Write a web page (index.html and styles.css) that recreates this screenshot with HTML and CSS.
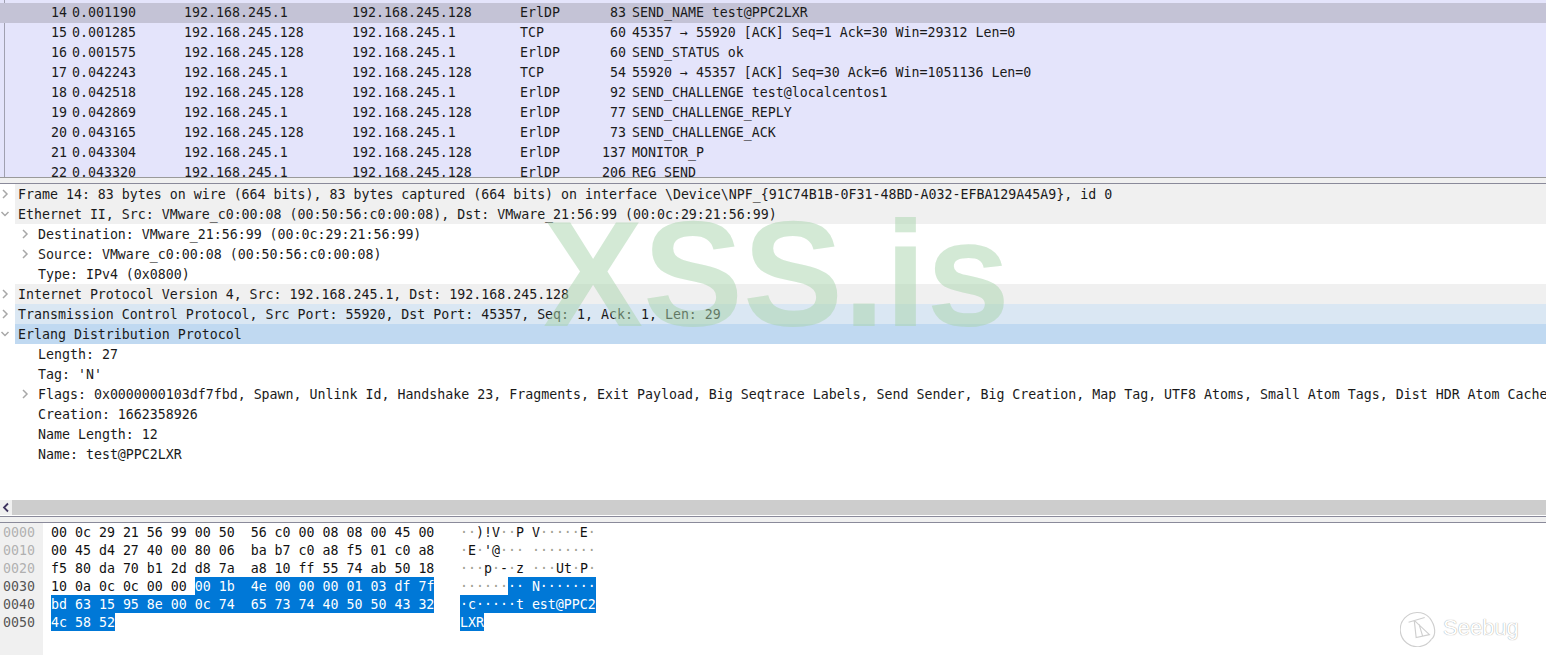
FILE: index.html
```html
<!DOCTYPE html>
<html>
<head>
<meta charset="utf-8">
<title>Wireshark capture</title>
<link rel="stylesheet" href="styles.css">
</head>
<body>
<main class="app">
  <section class="list">
    <div class="rows">
    <div class="pkt sel"><span class="no">14</span><span>0.001190</span><span>192.168.245.1</span><span>192.168.245.128</span><span>ErlDP</span><span class="len">83</span><span>SEND_NAME test@PPC2LXR</span></div>
    <div class="pkt"><span class="no">15</span><span>0.001285</span><span>192.168.245.128</span><span>192.168.245.1</span><span>TCP</span><span class="len">60</span><span>45357 → 55920 [ACK] Seq=1 Ack=30 Win=29312 Len=0</span></div>
    <div class="pkt"><span class="no">16</span><span>0.001575</span><span>192.168.245.128</span><span>192.168.245.1</span><span>ErlDP</span><span class="len">60</span><span>SEND_STATUS ok</span></div>
    <div class="pkt"><span class="no">17</span><span>0.042243</span><span>192.168.245.1</span><span>192.168.245.128</span><span>TCP</span><span class="len">54</span><span>55920 → 45357 [ACK] Seq=30 Ack=6 Win=1051136 Len=0</span></div>
    <div class="pkt"><span class="no">18</span><span>0.042518</span><span>192.168.245.128</span><span>192.168.245.1</span><span>ErlDP</span><span class="len">92</span><span>SEND_CHALLENGE test@localcentos1</span></div>
    <div class="pkt"><span class="no">19</span><span>0.042869</span><span>192.168.245.1</span><span>192.168.245.128</span><span>ErlDP</span><span class="len">77</span><span>SEND_CHALLENGE_REPLY</span></div>
    <div class="pkt"><span class="no">20</span><span>0.043165</span><span>192.168.245.128</span><span>192.168.245.1</span><span>ErlDP</span><span class="len">73</span><span>SEND_CHALLENGE_ACK</span></div>
    <div class="pkt"><span class="no">21</span><span>0.043304</span><span>192.168.245.1</span><span>192.168.245.128</span><span>ErlDP</span><span class="len">137</span><span>MONITOR_P</span></div>
    <div class="pkt"><span class="no">22</span><span>0.043320</span><span>192.168.245.1</span><span>192.168.245.128</span><span>ErlDP</span><span class="len">206</span><span>REG_SEND</span></div>
    </div>
  </section>
  <div class="split"></div>
  <section class="tree">
    <div class="node top"><svg class="tw" viewBox="0 0 10 10"><path d="M3 1 7 5 3 9"/></svg><span class="lbl">Frame 14: 83 bytes on wire (664 bits), 83 bytes captured (664 bits) on interface \Device\NPF_{91C74B1B-0F31-48BD-A032-EFBA129A45A9}, id 0</span></div>
    <div class="node top"><svg class="tw" viewBox="0 0 10 10"><path d="M1.5 3 5 6.5 8.5 3"/></svg><span class="lbl">Ethernet II, Src: VMware_c0:00:08 (00:50:56:c0:00:08), Dst: VMware_21:56:99 (00:0c:29:21:56:99)</span></div>
    <div class="node sub"><svg class="tw" viewBox="0 0 10 10"><path d="M3 1 7 5 3 9"/></svg><span class="lbl">Destination: VMware_21:56:99 (00:0c:29:21:56:99)</span></div>
    <div class="node sub"><svg class="tw" viewBox="0 0 10 10"><path d="M3 1 7 5 3 9"/></svg><span class="lbl">Source: VMware_c0:00:08 (00:50:56:c0:00:08)</span></div>
    <div class="node sub leaf"><span class="lbl">Type: IPv4 (0x0800)</span></div>
    <div class="node top"><svg class="tw" viewBox="0 0 10 10"><path d="M3 1 7 5 3 9"/></svg><span class="lbl">Internet Protocol Version 4, Src: 192.168.245.1, Dst: 192.168.245.128</span></div>
    <div class="node top tcp"><svg class="tw" viewBox="0 0 10 10"><path d="M3 1 7 5 3 9"/></svg><span class="lbl">Transmission Control Protocol, Src Port: 55920, Dst Port: 45357, Seq: 1, Ack: 1, Len: 29</span></div>
    <div class="node top erl"><svg class="tw" viewBox="0 0 10 10"><path d="M1.5 3 5 6.5 8.5 3"/></svg><span class="lbl">Erlang Distribution Protocol</span></div>
    <div class="node sub leaf"><span class="lbl">Length: 27</span></div>
    <div class="node sub leaf"><span class="lbl">Tag: 'N'</span></div>
    <div class="node sub"><svg class="tw" viewBox="0 0 10 10"><path d="M3 1 7 5 3 9"/></svg><span class="lbl">Flags: 0x0000000103df7fbd, Spawn, Unlink Id, Handshake 23, Fragments, Exit Payload, Big Seqtrace Labels, Send Sender, Big Creation, Map Tag, UTF8 Atoms, Small Atom Tags, Dist HDR Atom Cache</span></div>
    <div class="node sub leaf"><span class="lbl">Creation: 1662358926</span></div>
    <div class="node sub leaf"><span class="lbl">Name Length: 12</span></div>
    <div class="node sub leaf"><span class="lbl">Name: test@PPC2LXR</span></div>
  </section>
  <div class="hscroll"><svg class="sarrow" viewBox="0 0 12 15"><path d="M8 3.5 4 7.5 8 11.5"/></svg></div>
  <div class="split2"></div>
  <section class="hex">
    <div class="offs"><div>0000</div><div>0010</div><div>0020</div><div class="on">0030</div><div class="on">0040</div><div class="on">0050</div></div>
    <div class="bytes">
      <div>00 0c 29 21 56 99 00 50  56 c0 00 08 08 00 45 00</div>
      <div>00 45 d4 27 40 00 80 06  ba b7 c0 a8 f5 01 c0 a8</div>
      <div>f5 80 da 70 b1 2d d8 7a  a8 10 ff 55 74 ab 50 18</div>
      <div>10 0a 0c 0c 00 00 <mark>00 1b  4e 00 00 00 01 03 df 7f</mark></div>
      <div><mark>bd 63 15 95 8e 00 0c 74  65 73 74 40 50 50 43 32</mark></div>
      <div><mark>4c 58 52</mark></div>
    </div>
    <div class="ascii">
      <div><i>··</i>)!V<i>··</i>P V<i>·····</i>E<i>·</i></div>
      <div><i>·</i>E<i>·</i>'@<i>···</i> <i>········</i></div>
      <div><i>···</i>p<i>·</i>-<i>·</i>z <i>···</i>Ut<i>·</i>P<i>·</i></div>
      <div><i>······</i><mark>·· N·······</mark></div>
      <div><mark>·c·····t est@PPC2</mark></div>
      <div><mark>LXR</mark></div>
    </div>
  </section>
  <div class="wm">XSS.is</div>
  <div class="seebug">
    <svg class="sb-icon" viewBox="0 0 40 40"><path d="M31 9A18 18 0 1 0 33 32"/><path d="M31 9C38 18 38 28 33 32"/><path d="M9 14 26 9M15 12 17 30 31 27 15 12M20 16 24 29"/></svg>
    <span class="sb-text">Seebug</span>
  </div>
</main>
</body>
</html>
```
FILE: styles.css
```css
html, body { margin: 0; padding: 0; background: #fff; }
.app { position: relative; width: 1546px; height: 655px; overflow: hidden; display: flex; flex-direction: column; font-family: "DejaVu Sans Mono", monospace; font-size: 13.28px; color: #1a1a1a; }
.list { flex: none; height: 178px; box-sizing: border-box; padding-left: 4px; background: #e4e4fb; overflow: hidden; border-bottom: 1px solid #9a9a9a; }
.rows { border-left: 1px solid #a0a0b0; padding-top: 3px; height: 100%; box-sizing: border-box; }
.pkt { display: grid; grid-template-columns: 67px 112px 168px 168px 78px 34px 1fr; height: 20px; line-height: 20px; white-space: pre; }
.pkt .no { text-align: right; padding-right: 5px; }
.pkt .len { text-align: right; padding-right: 6px; }
.pkt.sel { background: #c4c3d6; margin-left: -5px; padding-left: 5px; }
.split { flex: none; height: 6px; box-sizing: border-box; background: #f0f0f0; border-bottom: 1px solid #8a8a9a; }
.tree { flex: none; height: 316px; overflow: hidden; background: #fff; }
.node { display: flex; align-items: center; height: 20px; white-space: pre; }
.tw { width: 10px; height: 10px; fill: none; stroke: #a8a8a8; stroke-width: 1.5; flex: none; }
.top .tw { margin-right: 5px; }
.top .lbl { flex: 1; background: #f0f0f0; height: 20px; line-height: 22px; padding-left: 3px; }
.tcp .lbl { background: #dae7f3; }
.erl .lbl { background: #c0d9f1; }
.sub { padding-left: 20px; }
.sub .tw { margin-right: 8px; }
.leaf { padding-left: 38px; }
.hscroll { flex: none; height: 15px; margin-bottom: 1px; background: #cdcdcd; display: flex; align-items: stretch; }
.sarrow { width: 12px; height: 15px; background: #f0f0f0; fill: none; stroke: #3f3560; stroke-width: 1.8; }
.split2 { flex: none; height: 7px; box-sizing: border-box; background: #f0f0f0; border-top: 1px solid #8a8a9a; border-bottom: 1px solid #8a8a9a; }
.hex { flex: 1; display: flex; color: #111; }
.hex > div > div { white-space: pre; height: 18px; line-height: 20px; }
.offs { flex: none; width: 40px; padding-left: 3px; background: #f0f0f0; color: #b0b0b0; }
.offs .on { color: #555; }
.bytes { flex: none; margin-left: 8px; width: 409px; }
.ascii { flex: none; width: 140px; }
mark { display: inline-block; height: 18px; line-height: 20px; vertical-align: top; background: #0078d7; color: #fff; }
.ascii i { font-style: normal; color: #a0a090; }
.wm { position: absolute; left: 543px; top: 186px; font-family: "Liberation Sans", sans-serif; font-weight: 700; font-size: 150px; line-height: 176px; color: rgba(167, 211, 171, 0.5); white-space: pre; }
.seebug { position: absolute; left: 1400px; top: 609px; display: flex; align-items: center; gap: 5px; }
.sb-icon { width: 38px; height: 38px; fill: none; stroke: #cfcfcf; stroke-width: 1.2; }
.sb-text { font-family: "Liberation Sans", sans-serif; font-size: 22px; color: #fff; text-shadow: 0 0 1px #808080; }
```
